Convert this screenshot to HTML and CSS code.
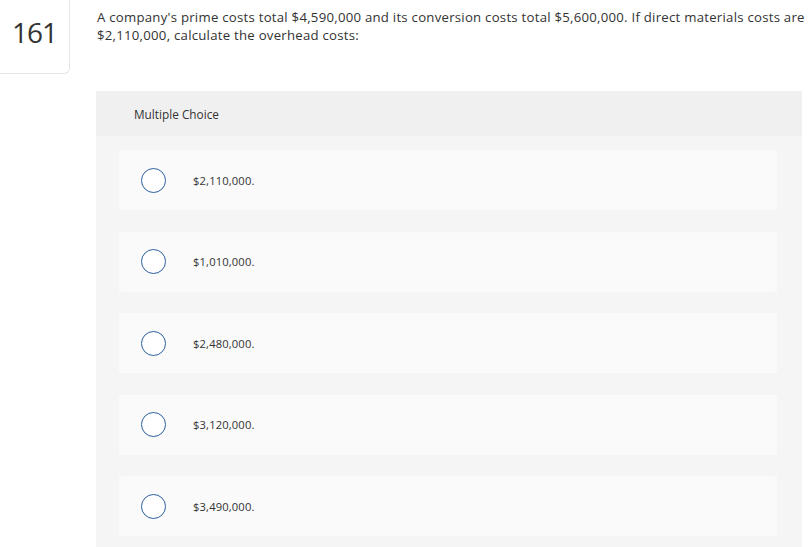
FILE: index.html
```html
<!DOCTYPE html>
<html>
<head>
<meta charset="utf-8">
<link rel="stylesheet" href="styles.css">
</head>
<body>
<div class="page">
  <div class="num-box"><span class="num">161</span></div>
  <div class="main">
    <div class="question">A company's prime costs total $4,590,000 and its conversion costs total $5,600,000. If direct materials costs are $2,110,000, calculate the overhead costs:</div>
    <div class="panel">
      <div class="panel-head">Multiple Choice</div>
      <div class="panel-body">
        <div class="option"><span class="radio"></span><span class="label">$2,110,000.</span></div>
        <div class="option"><span class="radio"></span><span class="label">$1,010,000.</span></div>
        <div class="option"><span class="radio"></span><span class="label">$2,480,000.</span></div>
        <div class="option"><span class="radio"></span><span class="label">$3,120,000.</span></div>
        <div class="option"><span class="radio"></span><span class="label">$3,490,000.</span></div>
      </div>
    </div>
  </div>
</div>
</body>
</html>
```
FILE: styles.css
```css
html, body {
  margin: 0;
  padding: 0;
  background: #ffffff;
  font-family: "Open Sans", "Liberation Sans", sans-serif;
  color: #333333;
  overflow: hidden;
}
.page {
  display: flex;
  align-items: stretch;
  width: 812px;
  height: 547px;
}
.num-box {
  flex: none;
  align-self: flex-start;
  width: 69px;
  height: 73px;
  border-right: 1px solid #e6e6e6;
  border-bottom: 1px solid #e6e6e6;
  border-bottom-right-radius: 6px;
  display: flex;
  justify-content: center;
}
.num {
  font-family: "Open Sans", sans-serif;
  font-size: 28px;
  line-height: 28px;
  margin-top: 18px;
  color: #333333;
  letter-spacing: -1px;
}
.main {
  margin-left: 26px;
  flex: 1;
  min-width: 0;
  display: flex;
  flex-direction: column;
}
.question {
  font-size: 13.2px;
  letter-spacing: 0.25px;
  line-height: 18px;
  padding-top: 8px;
  padding-left: 1px;
  color: #333333;
}
.panel {
  margin-top: 47px;
  width: 706px;
  background: #f5f5f5;
  flex: 1;
  overflow: hidden;
}
.panel-head {
  background: #f0f0f0;
  height: 45px;
  display: flex;
  align-items: center;
  padding-left: 38px;
  font-size: 11.8px;
  color: #333333;
}
.panel-body {
  padding: 14px 25px 0 23px;
  display: flex;
  flex-direction: column;
  gap: 21.5px;
}
.option {
  height: 60px;
  background: #fafafa;
  border-radius: 3px;
  display: flex;
  align-items: center;
  padding-left: 22px;
}
.radio {
  width: 23px;
  height: 23px;
  border: 1.5px solid #2b5f9e;
  border-radius: 50%;
  background: #ffffff;
  flex: none;
}
.label {
  margin-left: 27px;
  font-size: 11.2px;
  letter-spacing: 0.15px;
  color: #333333;
}
```
